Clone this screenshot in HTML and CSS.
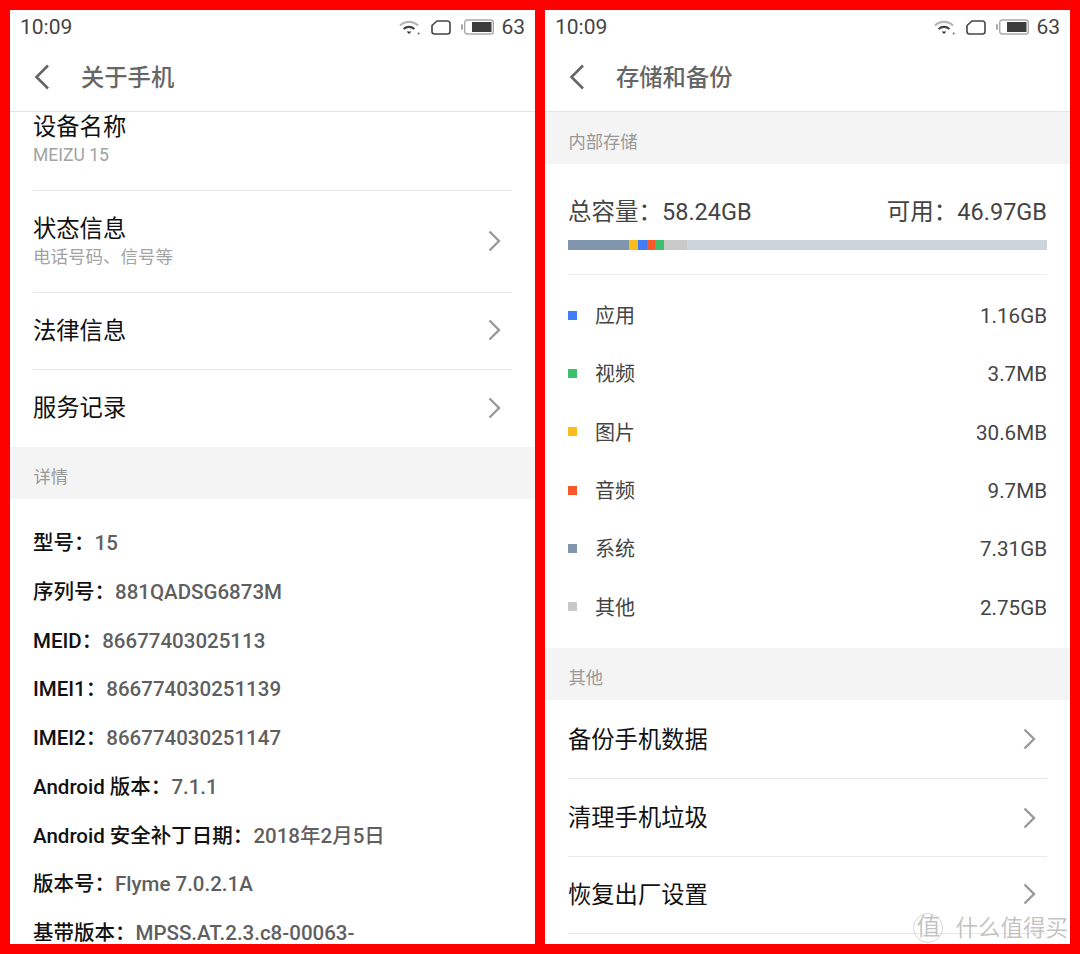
FILE: index.html
```html
<!DOCTYPE html>
<html lang="zh-CN">
<head>
    <meta charset="UTF-8">
    <meta name="viewport" content="width=device-width, initial-scale=1.0">
    <title>Flyme 设置</title>
    <link rel="stylesheet" href="styles.css">
</head>
<body>

    <svg class="sprites" width="0" height="0">
        <symbol id="wifi" viewBox="0 0 22 16">
            <path d="M1 6.500a13 13 0 0 1 18 0" fill="none" stroke="#b5b5b5" stroke-width="2.200"/>
            <path d="M4.600 10a8 8 0 0 1 10.800 0" fill="none" stroke="#444" stroke-width="2.200"/>
            <path d="M7.600 12.400h4.800l-2.400 2.600z" fill="#333"/>
            <circle cx="19.600" cy="14.600" r="1" fill="#666"/>
        </symbol>
        <symbol id="sim" viewBox="0 0 20 15">
            <path d="M6 1h10.500a2.500 2.500 0 0 1 2.500 2.500v8a2.500 2.500 0 0 1-2.500 2.500h-13a2.500 2.500 0 0 1-2.500-2.500v-6z" fill="none" stroke="#444" stroke-width="1.600"/>
        </symbol>
        <symbol id="battery" viewBox="0 0 33 16">
            <rect x="0" y="5" width="2" height="6" rx="1" fill="#aaa"/>
            <rect x="3.700" y="1" width="28.600" height="14" rx="2.500" fill="none" stroke="#aaa" stroke-width="1.400"/>
            <rect x="11" y="3" width="19.500" height="10" fill="#3d3d3d"/>
        </symbol>
        <symbol id="back" viewBox="0 0 16 26">
            <path d="M14 1.500 2.500 13 14 24.500" fill="none" stroke="#666" stroke-width="2.600"/>
        </symbol>
        <symbol id="more" viewBox="0 0 13 22">
            <path d="M1.500 1.500 11 11l-9.500 9.500" fill="none" stroke="#999" stroke-width="2.400"/>
        </symbol>
    </svg>

    <div class="phone">
        <div class="statusbar">
            <span class="time">10:09</span>
            <div class="status-icons">
                <svg class="ic-wifi"><use href="#wifi"/></svg>
                <svg class="ic-sim"><use href="#sim"/></svg>
                <svg class="ic-battery"><use href="#battery"/></svg>
                <span class="level">63</span>
            </div>
        </div>
        <div class="titlebar">
            <svg class="ic-back"><use href="#back"/></svg>
            <span class="title">关于手机</span>
        </div>

        <div class="item item-cut">
            <div class="item-text">
                <div class="item-name">设备名称</div>
                <div class="item-sub">MEIZU 15</div>
            </div>
        </div>
        <div class="item item-tall">
            <div class="item-text">
                <div class="item-name">状态信息</div>
                <div class="item-sub">电话号码、信号等</div>
            </div>
            <svg class="ic-more"><use href="#more"/></svg>
        </div>
        <div class="item item-short">
            <div class="item-name">法律信息</div>
            <svg class="ic-more"><use href="#more"/></svg>
        </div>
        <div class="item item-last">
            <div class="item-name">服务记录</div>
            <svg class="ic-more"><use href="#more"/></svg>
        </div>

        <div class="section">详情</div>

        <div class="details">
            <div class="line"><b>型号：</b>15</div>
            <div class="line"><b>序列号：</b>881QADSG6873M</div>
            <div class="line"><b>MEID：</b>86677403025113</div>
            <div class="line"><b>IMEI1：</b>866774030251139</div>
            <div class="line"><b>IMEI2：</b>866774030251147</div>
            <div class="line"><b>Android 版本：</b>7.1.1</div>
            <div class="line"><b>Android 安全补丁日期：</b>2018年2月5日</div>
            <div class="line"><b>版本号：</b>Flyme 7.0.2.1A</div>
            <div class="line"><b>基带版本：</b>MPSS.AT.2.3.c8-00063-</div>
        </div>
    </div>

    <div class="phone">
        <div class="statusbar">
            <span class="time">10:09</span>
            <div class="status-icons">
                <svg class="ic-wifi"><use href="#wifi"/></svg>
                <svg class="ic-sim"><use href="#sim"/></svg>
                <svg class="ic-battery"><use href="#battery"/></svg>
                <span class="level">63</span>
            </div>
        </div>
        <div class="titlebar">
            <svg class="ic-back"><use href="#back"/></svg>
            <span class="title">存储和备份</span>
        </div>

        <div class="section">内部存储</div>

        <div class="storage">
            <div class="totals">
                <span>总容量：<i>58.24GB</i></span>
                <span>可用：<i>46.97GB</i></span>
            </div>
            <div class="bar">
                <span class="seg" style="width:60.6px;background:#7f96ad"></span>
                <span class="seg" style="width:9px;background:#fdbc1c"></span>
                <span class="seg" style="width:9.2px;background:#3f7ef6"></span>
                <span class="seg" style="width:8.3px;background:#f8592a"></span>
                <span class="seg" style="width:9px;background:#3cc06c"></span>
                <span class="seg" style="width:23px;background:#c9c9c9"></span>
            </div>
        </div>

        <div class="usage">
            <div class="use"><span class="dot" style="background:#3f7ef6"></span><span class="use-name">应用</span><span class="use-size">1.16GB</span></div>
            <div class="use"><span class="dot" style="background:#3cc06c"></span><span class="use-name">视频</span><span class="use-size">3.7MB</span></div>
            <div class="use"><span class="dot" style="background:#fdbc1c"></span><span class="use-name">图片</span><span class="use-size">30.6MB</span></div>
            <div class="use"><span class="dot" style="background:#f8592a"></span><span class="use-name">音频</span><span class="use-size">9.7MB</span></div>
            <div class="use"><span class="dot" style="background:#7f96ad"></span><span class="use-name">系统</span><span class="use-size">7.31GB</span></div>
            <div class="use"><span class="dot" style="background:#c9c9c9"></span><span class="use-name">其他</span><span class="use-size">2.75GB</span></div>
        </div>

        <div class="section">其他</div>

        <div class="item item-first">
            <div class="item-name">备份手机数据</div>
            <svg class="ic-more"><use href="#more"/></svg>
        </div>
        <div class="item">
            <div class="item-name">清理手机垃圾</div>
            <svg class="ic-more"><use href="#more"/></svg>
        </div>
        <div class="item item-short">
            <div class="item-name">恢复出厂设置</div>
            <svg class="ic-more"><use href="#more"/></svg>
        </div>

        <div class="watermark"><span class="stamp">值</span>什么值得买</div>
    </div>

</body>
</html>
```

FILE: styles.css
```css
html, body {
    margin: 0;
    padding: 0;
}

body {
    width: 1080px;
    height: 954px;
    box-sizing: border-box;
    padding: 10px;
    display: flex;
    justify-content: space-between;
    background: #ff0000;
    font-family: Roboto, "Noto Sans CJK SC", sans-serif;
    color: #111;
    overflow: hidden;
}

.sprites {
    position: absolute;
}

.phone {
    position: relative;
    width: 525px;
    height: 934px;
    background: #ffffff;
    overflow: hidden;
}

.statusbar {
    height: 34px;
    padding: 0 10px;
    display: flex;
    justify-content: space-between;
    align-items: center;
    color: #444;
    font-size: 21px;
}

.status-icons {
    display: flex;
    align-items: center;
}

.ic-wifi {
    width: 22px;
    height: 16px;
    margin-right: 10px;
}

.ic-sim {
    width: 20px;
    height: 15px;
    margin-right: 10px;
}

.ic-battery {
    width: 33px;
    height: 16px;
    margin-right: 7px;
}

.titlebar {
    height: 68px;
    box-sizing: border-box;
    border-bottom: 1px solid #e4e4e4;
    padding: 0 24px 4px;
    display: flex;
    align-items: center;
    color: #666;
}

.ic-back {
    width: 16px;
    height: 26px;
    margin-top: 2px;
}

.title {
    margin-left: 31px;
    font-size: 23.300px;
    font-weight: 500;
}

.item {
    height: 78px;
    box-sizing: border-box;
    margin: 0 23px;
    border-bottom: 1px solid #e8e8e8;
    display: flex;
    justify-content: space-between;
    align-items: center;
    font-size: 23.300px;
}

.item-first {
    height: 79px;
    padding-top: 2px;
}

.item-first .ic-more {
    margin-bottom: 2px;
}

.item-short {
    height: 77px;
}

.item-short .ic-more {
    margin-bottom: 2px;
}

.item-cut {
    height: 79px;
    align-items: flex-start;
}

.item-tall {
    height: 102px;
}

.item-last {
    height: 77px;
    padding-bottom: 2px;
    border-bottom: none;
}

.item-name {
    line-height: 30px;
}

.item-sub {
    font-size: 17.500px;
    line-height: 26px;
    color: #a2a2a2;
}

.item-tall .ic-more {
    margin-bottom: 2px;
}

.ic-more {
    width: 13px;
    height: 22px;
    margin-right: 11px;
}

.section {
    height: 52px;
    box-sizing: border-box;
    padding: 5px 23.500px 0;
    display: flex;
    align-items: center;
    background: #f4f4f4;
    color: #999;
    font-size: 17.300px;
}

.details {
    padding: 20px 23px 0;
}

.line {
    height: 48.750px;
    line-height: 48.750px;
    white-space: nowrap;
    font-size: 20.500px;
    font-weight: 500;
    color: #5f5f5f;
}

.line b {
    font-weight: 500;
    color: #111;
}

.storage {
    margin: 0 23px;
    padding-top: 32px;
    height: 111px;
    box-sizing: border-box;
    border-bottom: 1px solid #ececec;
}

.totals {
    display: flex;
    justify-content: space-between;
    font-size: 23.500px;
    line-height: 32px;
    color: #444;
}

.totals i {
    font-style: normal;
}

.bar {
    display: flex;
    height: 10px;
    margin-top: 12px;
    background: #ccd5dc;
}

.seg {
    display: block;
}

.usage {
    padding: 12px 23px 0;
    height: 373px;
    box-sizing: border-box;
}

.use {
    height: 58.300px;
    display: flex;
    align-items: center;
    font-size: 20px;
    line-height: 28px;
    color: #444;
}

.dot {
    width: 9px;
    height: 9px;
    margin-bottom: 2px;
}

.use-name {
    height: 28px;
    margin-left: 18px;
    flex: 1;
}

.use-size {
    height: 28px;
    font-size: 20.600px;
}

.watermark {
    position: absolute;
    right: 2px;
    bottom: 1px;
    display: flex;
    align-items: center;
    font-size: 22.500px;
    line-height: 30px;
    color: rgba(120, 120, 120, 0.45);
    text-shadow: 0 0 2px #ffffff;
}

.stamp {
    width: 28px;
    height: 28px;
    margin-right: 12px;
    border-radius: 50%;
    border: 1px solid rgba(120, 120, 120, 0.3);
    text-align: center;
    font-size: 24px;
    line-height: 27px;
}
```
